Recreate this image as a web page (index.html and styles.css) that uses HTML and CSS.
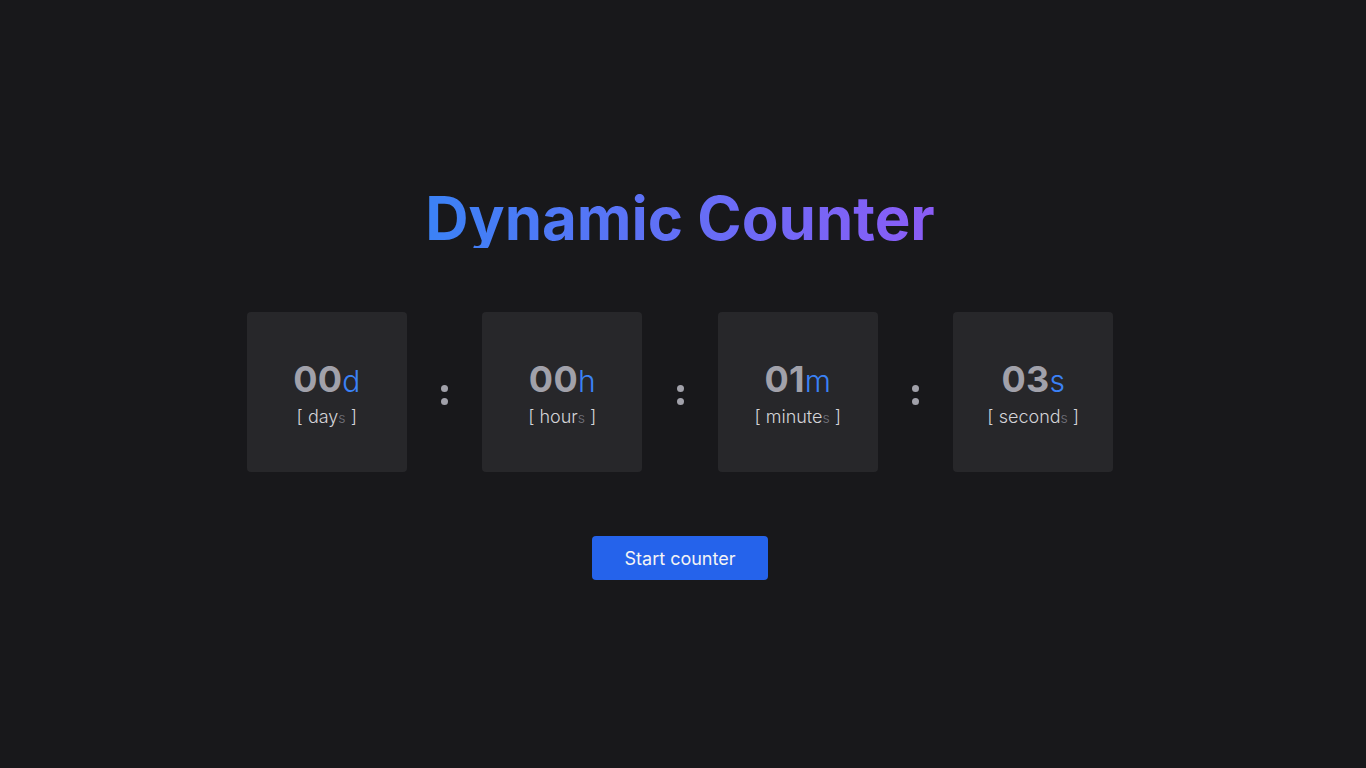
FILE: index.html
```html
<!DOCTYPE html>
<html lang="en">
<head>
<meta charset="utf-8">
<title>Dynamic Counter</title>
<link rel="stylesheet" href="styles.css">
</head>
<body>
<main class="page">
  <h1 class="title">Dynamic Counter</h1>
  <div class="counter">
    <div class="unit-box">
      <div class="value">00<span class="suffix">d</span></div>
      <div class="label">[ day<span class="plural">s</span> ]</div>
    </div>
    <div class="colon"><span class="dot"></span><span class="dot"></span></div>
    <div class="unit-box">
      <div class="value">00<span class="suffix">h</span></div>
      <div class="label">[ hour<span class="plural">s</span> ]</div>
    </div>
    <div class="colon"><span class="dot"></span><span class="dot"></span></div>
    <div class="unit-box">
      <div class="value">01<span class="suffix">m</span></div>
      <div class="label">[ minute<span class="plural">s</span> ]</div>
    </div>
    <div class="colon"><span class="dot"></span><span class="dot"></span></div>
    <div class="unit-box">
      <div class="value">03<span class="suffix">s</span></div>
      <div class="label">[ second<span class="plural">s</span> ]</div>
    </div>
  </div>
  <button class="start-btn" type="button">Start counter</button>
</main>
</body>
</html>
```

FILE: styles.css
```css
* { box-sizing: border-box; }
html, body {
  margin: 0;
  padding: 0;
  background: #18181b;
  font-family: Inter, "Noto Sans", sans-serif;
  color: #d4d4d8;
}
.page {
  min-height: 100vh;
  width: 1360px;
  display: flex;
  flex-direction: column;
  align-items: center;
  justify-content: center;
}
.title {
  margin: 0;
  font-size: 60px;
  line-height: 60px;
  font-weight: 700;
  background: linear-gradient(to right, #3b82f6, #8b5cf6);
  -webkit-background-clip: text;
  background-clip: text;
  color: transparent;
}
.counter {
  margin-top: 64px;
  display: flex;
  align-items: center;
  gap: 34.25px;
}
.unit-box {
  width: 160px;
  height: 160px;
  padding-top: 6px;
  background: #27272a;
  border-radius: 4px;
  display: flex;
  flex-direction: column;
  align-items: center;
  justify-content: center;
}
.value {
  font-size: 36px;
  line-height: 40px;
  font-weight: 700;
  letter-spacing: 0.3px;
  color: #a1a1aa;
}
.suffix {
  font-size: 30px;
  font-weight: 300;
  letter-spacing: 0;
  color: #3b82f6;
}
.label {
  font-size: 18px;
  line-height: 28px;
  font-weight: 300;
  color: #d4d4d8;
  margin-top: 2px;
}
.plural {
  font-size: 14px;
  color: #71717a;
}
.colon {
  width: 7px;
  margin-top: 5px;
  display: flex;
  flex-direction: column;
  gap: 6px;
}
.dot {
  width: 7px;
  height: 7px;
  border-radius: 50%;
  background: #a1a1aa;
}
.start-btn {
  margin-top: 64px;
  width: 176px;
  height: 44px;
  border: 0;
  border-radius: 4px;
  background: #2563eb;
  color: #f4f4f5;
  font-family: Inter, "Noto Sans", sans-serif;
  font-size: 18px;
  cursor: pointer;
}
```
